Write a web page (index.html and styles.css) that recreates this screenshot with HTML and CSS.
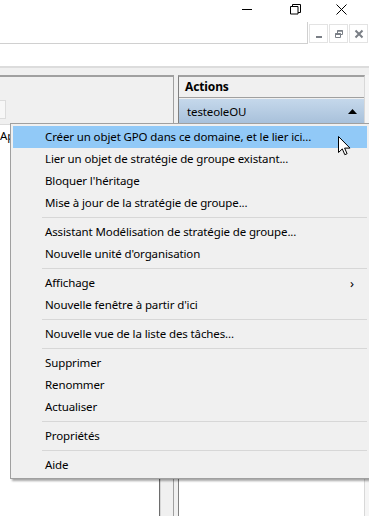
FILE: index.html
```html
<!DOCTYPE html>
<html lang="fr">
<head>
    <meta charset="UTF-8">
    <meta name="viewport" content="width=device-width, initial-scale=1.0">
    <title>Gestion de stratégie de groupe</title>
    <link rel="stylesheet" href="styles.css">
</head>
<body>
    <div class="window">
        <div class="titlebar">
            <span class="cap-btn">
                <svg width="11" height="11" viewBox="0 0 11 11"><path d="M0 5.5h10" stroke="#000" stroke-width="1"/></svg>
            </span>
            <span class="cap-btn">
                <svg width="11" height="11" viewBox="0 0 11 11" fill="none" stroke="#000"><path d="M0.5 2.5h7.5v7.5h-7.5z"/><path d="M2.5 2.5v-2h8v8h-2.5"/></svg>
            </span>
            <span class="cap-btn">
                <svg width="11" height="11" viewBox="0 0 11 11"><path d="M0.5 0.5l10 10M10.5 0.5l-10 10" stroke="#000" stroke-width="1"/></svg>
            </span>
        </div>

        <div class="mdibar">
            <div class="mdi-fill"></div>
            <div class="mdi-buttons">
                <span class="mdi-btn">
                    <svg width="10" height="10" viewBox="0 0 10 10"><path d="M2 8h6" stroke="#7a7f86" stroke-width="2"/></svg>
                </span>
                <span class="mdi-btn">
                    <svg width="10" height="10" viewBox="0 0 10 10" fill="none" stroke="#7a7f86"><path d="M1.5 4.5h5v4h-5z"/><path d="M1.5 5h5" stroke-width="2"/><path d="M3.5 4.5v-3h5v4h-2"/><path d="M3.5 2h5" stroke-width="1.5"/></svg>
                </span>
                <span class="mdi-btn">
                    <svg width="10" height="10" viewBox="0 0 10 10"><path d="M1.5 1.5l7 7M8.5 1.5l-7 7" stroke="#7a7f86" stroke-width="2"/></svg>
                </span>
            </div>
        </div>

        <div class="toolbar"></div>

        <div class="workspace">
            <div class="left-pane">
                <div class="tab-strip"><span class="tab-stub"></span></div>
                <div class="list-area">
                    <div class="list-body">
                        <div class="list-head">Ap</div>
                    </div>
                    <div class="scroll-track"></div>
                </div>
            </div>
            <div class="splitter"></div>
            <div class="actions-pane">
                <div class="actions-title">Actions</div>
                <div class="actions-group">
                    <span>testeoleOU</span>
                    <svg class="collapse" width="9" height="5" viewBox="0 0 9 5"><path d="M0 5l4.5-5 4.5 5z" fill="#000"/></svg>
                </div>
                <div class="actions-body"></div>
            </div>
            <div class="edge"></div>
        </div>
    </div>

    <div class="context-menu">
        <div class="menu-item active">Créer un objet GPO dans ce domaine, et le lier ici...</div>
        <div class="menu-item">Lier un objet de stratégie de groupe existant...</div>
        <div class="menu-item">Bloquer l'héritage</div>
        <div class="menu-item">Mise à jour de la stratégie de groupe...</div>
        <div class="menu-sep"></div>
        <div class="menu-item">Assistant Modélisation de stratégie de groupe...</div>
        <div class="menu-item">Nouvelle unité d'organisation</div>
        <div class="menu-sep"></div>
        <div class="menu-item has-sub">Affichage <span class="sub-arrow">&#8250;</span></div>
        <div class="menu-item">Nouvelle fenêtre à partir d'ici</div>
        <div class="menu-sep"></div>
        <div class="menu-item">Nouvelle vue de la liste des tâches...</div>
        <div class="menu-sep"></div>
        <div class="menu-item">Supprimer</div>
        <div class="menu-item">Renommer</div>
        <div class="menu-item">Actualiser</div>
        <div class="menu-sep"></div>
        <div class="menu-item">Propriétés</div>
        <div class="menu-sep"></div>
        <div class="menu-item">Aide</div>
    </div>

    <svg class="cursor" width="13" height="20" viewBox="0 0 13 20">
        <path d="M0.5 0.5v16l3.8-3.6 2.5 5.8 2.3-1-2.5-5.6h5.4z" fill="#fff" stroke="#000" stroke-width="1"/>
    </svg>
</body>
</html>
```

FILE: styles.css
```css
body {
    margin: 0;
    font-family: "Noto Sans", "Open Sans", sans-serif;
    font-size: 11.5px;
    letter-spacing: -0.12px;
    color: #000;
    background-color: #fff;
    overflow: hidden;
}

.window {
    width: 369px;
    height: 516px;
    display: flex;
    flex-direction: column;
    background-color: #fff;
}

/* title bar */
.titlebar {
    height: 22px;
    display: flex;
    justify-content: flex-end;
    align-items: flex-start;
    padding-right: 22px;
    gap: 35px;
}

.cap-btn {
    width: 11px;
    height: 11px;
    margin-top: 4px;
    display: flex;
}

.titlebar .cap-btn:first-child {
    margin-right: 2px;
}

/* mdi child buttons */
.mdibar {
    height: 22px;
    display: flex;
}

.mdi-fill {
    width: 307px;
    border-right: 1px solid #d0d0d0;
    border-bottom: 1px solid #d0d0d0;
}

.mdi-buttons {
    display: flex;
    padding-top: 2px;
    padding-left: 1px;
    gap: 1px;
}

.mdi-btn {
    width: 17px;
    height: 17px;
    border: 1px solid #e3e3e3;
    display: flex;
    align-items: center;
    justify-content: center;
}

.toolbar {
    height: 22px;
    border-bottom: 2px solid #dcdcdc;
}

/* main area */
.workspace {
    flex: 1;
    display: flex;
    background-color: #f0f0f0;
    padding-top: 7px;
}

.left-pane {
    width: 173px;
    border-top: 2px solid #a0a0a0;
    border-right: 1px solid #a0a0a0;
    display: flex;
    flex-direction: column;
}

.tab-strip {
    height: 47px;
    display: flex;
    align-items: flex-end;
    padding-bottom: 5px;
    box-sizing: border-box;
}

.tab-stub {
    width: 5px;
    height: 17px;
    border: 1px solid #dcdcdc;
    border-left: none;
    background-color: #f7f7f7;
}

.list-area {
    flex: 1;
    display: flex;
}

.list-body {
    width: 160px;
    background-color: #fff;
    border-top: 1px solid #dcdcdc;
    border-right: 1px solid #6d6d6d;
}

.list-head {
    padding: 3px 0 0 0;
    height: 18px;
    overflow: hidden;
}

.scroll-track {
    width: 12px;
    background-color: #f0f0f0;
    border-left: 1px solid #d6d6d6;
}

.splitter {
    width: 4px;
}

.actions-pane {
    width: 185px;
    border-top: 2px solid #a0a0a0;
    border-left: 1px solid #808080;
    border-right: 1px solid #d8d8d8;
    display: flex;
    flex-direction: column;
}

.actions-title {
    height: 20px;
    padding-left: 6px;
    font-size: 12px;
    font-weight: bold;
    line-height: 20px;
    border-bottom: 1px solid #a0a0a0;
    background-color: #f0f0f0;
}

.actions-group {
    height: 25px;
    margin-top: 1px;
    padding: 0 7px 0 8px;
    display: flex;
    align-items: center;
    justify-content: space-between;
    background: linear-gradient(#c5d8eb, #a7c0da);
}

.collapse {
    margin-top: -1px;
}

.actions-body {
    flex: 1;
    background-color: #fff;
}

.edge {
    flex: 1;
    background-color: #f5f5f5;
}

/* context menu */
.context-menu {
    position: absolute;
    left: 10px;
    top: 123px;
    width: 354px;
    padding: 2px;
    background-color: #f0f0f0;
    border: 1px solid #a0a0a0;
    box-shadow: 2px 2px 2px rgba(0, 0, 0, 0.35);
}

.menu-item {
    height: 22px;
    line-height: 22px;
    padding-left: 32px;
    display: flex;
    justify-content: space-between;
}

.menu-item.active {
    background-color: #91c9f7;
}

.sub-arrow {
    padding-right: 13px;
    font-size: 13px;
}

.menu-sep {
    height: 1px;
    margin: 3px 0 3px 29px;
    background-color: #d7d7d7;
}

.cursor {
    position: absolute;
    left: 338px;
    top: 136px;
}
```
